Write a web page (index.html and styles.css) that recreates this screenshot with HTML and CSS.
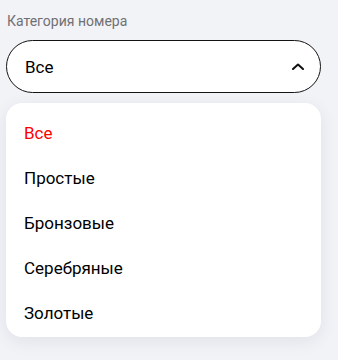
FILE: index.html
```html
<!DOCTYPE html>
<html lang="ru">
<head>
<meta charset="utf-8">
<link rel="stylesheet" href="styles.css">
</head>
<body>
<div class="field">
  <div class="label">Категория номера</div>
  <div class="select">
    <span class="value">Все</span>
    <svg class="chevron" width="12" height="7" viewBox="0 0 12 7"><path d="M1 6 L6 1.5 L11 6" fill="none" stroke="#111" stroke-width="2" stroke-linecap="round" stroke-linejoin="round"/></svg>
  </div>
  <ul class="menu">
    <li class="item active">Все</li>
    <li class="item">Простые</li>
    <li class="item">Бронзовые</li>
    <li class="item">Серебряные</li>
    <li class="item">Золотые</li>
  </ul>
</div>
</body>
</html>
```
FILE: styles.css
```css
html, body {
  margin: 0;
  padding: 0;
  background: #f2f3f7;
  font-family: Roboto, "Liberation Sans", sans-serif;
  height: 100%;
}
.field {
  width: 315px;
  margin-left: 6px;
  padding-top: 11px;
}
.label {
  font-size: 14px;
  line-height: 20px;
  color: #707074;
  margin-bottom: 9px;
  padding-left: 1px;
}
.select {
  box-sizing: border-box;
  height: 53px;
  border: 1px solid #141414;
  border-radius: 27px;
  background: #fff;
  display: flex;
  align-items: center;
  justify-content: space-between;
  padding: 0 16px 0 18px;
}
.value {
  font-size: 17px;
  color: #000;
}
.chevron {
  display: block;
}
.menu {
  list-style: none;
  margin: 10px 0 0;
  padding: 8px 0 1px;
  background: #fff;
  border-radius: 16px;
  box-shadow: 0 4px 18px rgba(20, 20, 60, 0.08);
}
.item {
  font-size: 17px;
  line-height: 45px;
  padding-left: 18px;
  color: #000;
}
.item.active {
  color: #f00;
}
```
